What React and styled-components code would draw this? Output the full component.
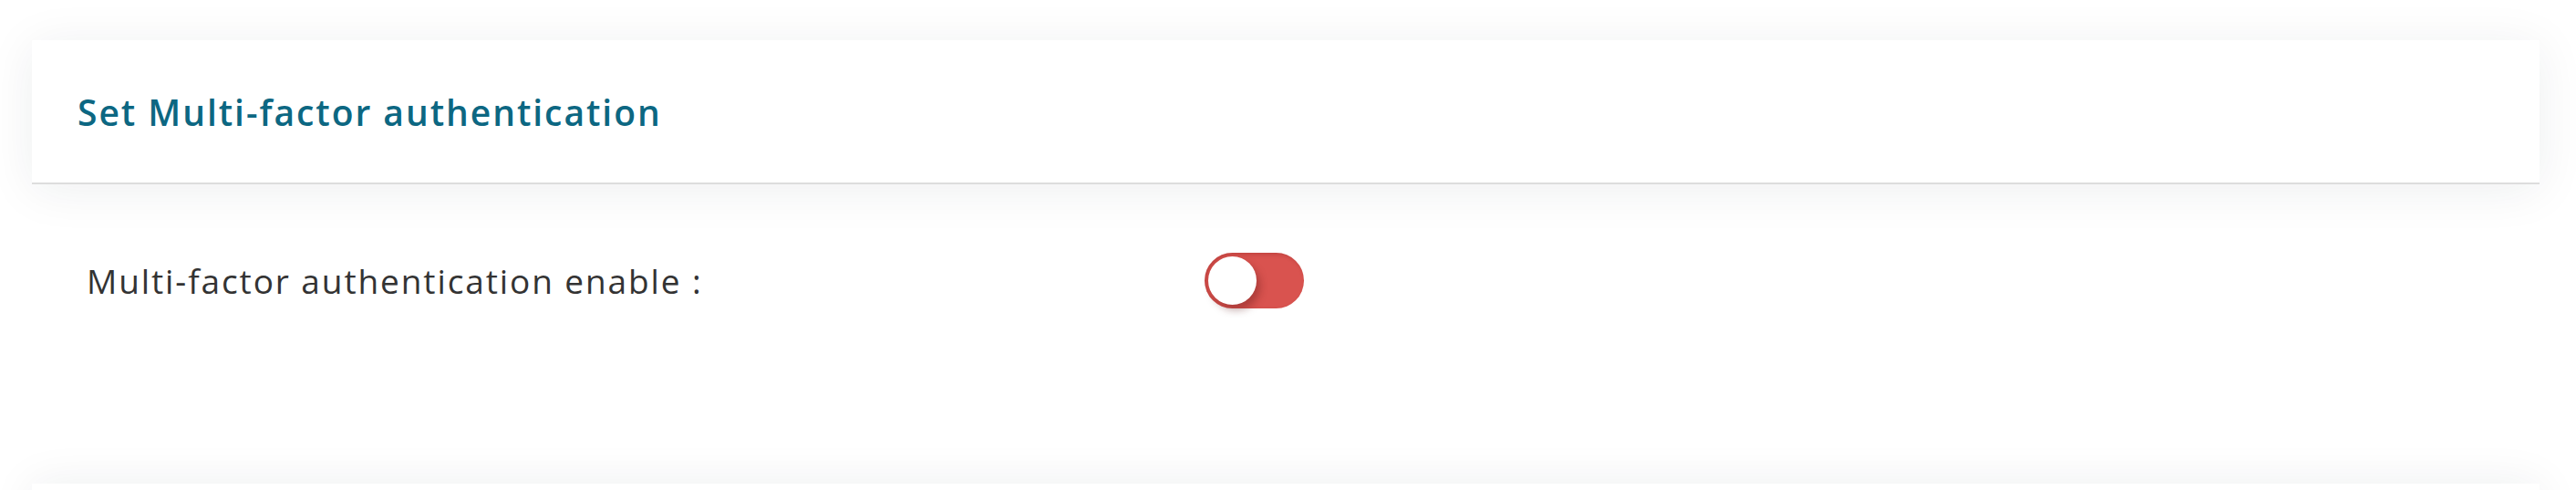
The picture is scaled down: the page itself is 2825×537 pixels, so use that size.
import React, { useState } from "react";
import styled, { createGlobalStyle } from "styled-components";

const Global = createGlobalStyle`
  html, body {
    margin: 0;
    padding: 0;
    background: #ffffff;
  }
  body {
    font-family: "Open Sans", "Noto Sans", sans-serif;
    overflow: hidden;
  }
`;

const Page = styled.div`
  width: 2825px;
  height: 537px;
  box-sizing: border-box;
  padding: 44px 40px 0 35px;
  display: flex;
  flex-direction: column;
  background: #ffffff;
  overflow: hidden;
  & > * {
    flex-shrink: 0;
  }
`;

const Card = styled.section`
  background: #ffffff;
  box-shadow: 0 6px 50px rgba(30, 40, 50, 0.075);
`;

const CardHeader = styled.header`
  height: 156px;
  display: flex;
  align-items: center;
  padding-left: 50px;
  border-bottom: 2px solid #dddddd;
  background: #ffffff;
`;

const Title = styled.h2`
  margin: 0;
  font-family: "Open Sans", "Noto Sans", sans-serif;
  font-weight: 600;
  font-size: 39px;
  color: #0c6782;
  letter-spacing: 1.95px;
`;

const CardBody = styled.div`
  height: 328px;
  box-sizing: border-box;
  padding: 74px 0 0 60px;
`;

const Row = styled.div`
  display: grid;
  grid-template-columns: 1226px auto;
  align-items: center;
  height: 62px;
`;

const Label = styled.label`
  font-family: "Open Sans", "Noto Sans", sans-serif;
  font-weight: 400;
  font-size: 37px;
  color: #333333;
  letter-spacing: 1.9px;
`;

const Track = styled.button`
  position: relative;
  width: 109px;
  height: 61px;
  border: none;
  padding: 0;
  border-radius: 31px;
  background: ${(p) => (p.$on ? "#4caf50" : "#d9534f")};
  cursor: pointer;
  box-shadow: inset 2px 2px 4px rgba(120, 20, 20, 0.25);
`;

const Knob = styled.span`
  position: absolute;
  top: 4px;
  left: ${(p) => (p.$on ? "52px" : "4px")};
  width: 53px;
  height: 53px;
  border-radius: 50%;
  background: #ffffff;
  box-shadow: 4px 6px 8px rgba(90, 20, 20, 0.35);
`;

const NextCard = styled.section`
  height: 60px;
  background: #ffffff;
  box-shadow: 0 0 50px rgba(30, 40, 50, 0.075);
`;

export default function App() {
  const [on, setOn] = useState(false);
  return (
    <>
      <Global />
      <Page>
        <Card>
          <CardHeader>
            <Title>Set Multi-factor authentication</Title>
          </CardHeader>
        </Card>
        <CardBody>
          <Row>
            <Label>Multi-factor authentication enable :</Label>
            <Track $on={on} onClick={() => setOn(!on)} aria-label="toggle">
              <Knob $on={on} />
            </Track>
          </Row>
        </CardBody>
        <NextCard />
      </Page>
    </>
  );
}
